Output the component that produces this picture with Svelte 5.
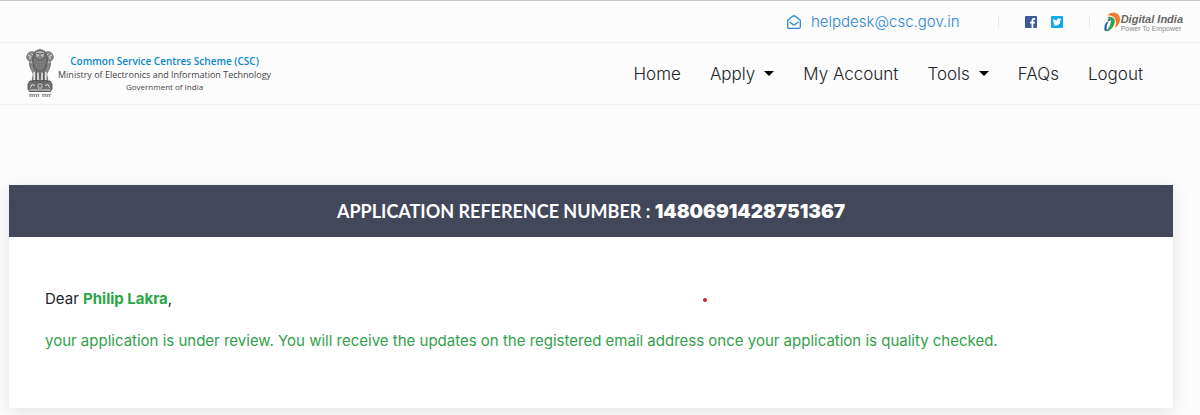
<script lang="ts">
  type NavItem = { label: string; menu?: boolean };

  const email = "helpdesk@csc.gov.in";
  const navItems: NavItem[] = [
    { label: "Home" },
    { label: "Apply", menu: true },
    { label: "My Account" },
    { label: "Tools", menu: true },
    { label: "FAQs" },
    { label: "Logout" }
  ];

  let reference = $state("1480691428751367");
  let applicant = $state("Philip Lakra");
</script>

<div class="page">
  <div class="topbar">
    <a class="mail" href={`mailto:${email}`}>
      <svg width="14" height="14" viewBox="0 0 14 14" aria-hidden="true">
        <path d="M.7 5.3 L6 1.1 Q7 .4 8 1.1 L13.3 5.3 V12 Q13.3 13.3 12 13.3 H2 Q.7 13.3 .7 12 Z M3 7.2 L6 9.6 Q7 10.3 8 9.6 L11 7.2" fill="none" stroke="currentColor" stroke-width="1.3" stroke-linejoin="round" stroke-linecap="round" />
      </svg>
      <span>{email}</span>
    </a>
    <div class="social">
      <a href="#facebook" aria-label="Facebook">
        <svg width="12" height="12" viewBox="0 0 12 12">
          <rect width="12" height="12" rx="1" fill="#3b5998" />
          <path d="M6.5 12 V7.6 H5 V5.8 H6.5 V4.4 Q6.5 2 8.8 2 H10.2 V3.7 H9.2 Q8.3 3.7 8.3 4.6 V5.8 H10.1 L9.8 7.6 H8.3 V12 Z" fill="#fff" />
        </svg>
      </a>
      <a href="#twitter" aria-label="Twitter">
        <svg width="12" height="12" viewBox="0 0 12 12">
          <rect width="12" height="12" rx="1" fill="#0fa8ea" />
          <path d="M10.3 3.4 L9.4 4.3 Q9.4 7.2 7.4 8.7 Q4.7 10.4 1.8 8.9 Q3.4 8.9 4.3 8.2 Q3 8 2.6 6.9 L3.4 6.8 Q2 6.3 2 4.9 L2.8 5.1 Q1.7 4.1 2.3 2.8 Q3.8 4.5 5.9 4.6 Q5.7 2.5 7.5 2.2 Q8.3 2.1 8.9 2.7 L10 2.4 L9.4 3.4 Z" fill="#fff" />
        </svg>
      </a>
    </div>
    <div class="digital">
      <svg width="17" height="20" viewBox="0 0 17 20" aria-hidden="true">
        <path d="M3 3.2 Q9.5 -2 14.4 2.6 Q19 9 11 16.2 Q13.4 8 9.8 5 Q7 2.8 3 3.2 Z" fill="#f27a32" />
        <path d="M3 5 Q9.6 4 10.8 8.4 Q11 13.8 5.4 18.6 Q3.4 20 2.4 18.8 Q8 12.3 6.6 8.2 Q5.5 6 3 5 Z" fill="#35a04a" />
        <path d="M4.9 8.9 Q0 10.3 .3 17.4 Q.8 19.6 2.9 18.8 Q2 13 4.9 8.9 Z" fill="#2c66aa" />
        <circle cx="5" cy="7.7" r="1.2" fill="#2c66aa" />
      </svg>
      <div class="digital-text">
        <strong>Digital India</strong>
        <span>Power To Empower</span>
      </div>
    </div>
  </div>

  <header>
    <a class="brand" href="#home">
      <svg width="28" height="50" viewBox="0 0 28 50" aria-hidden="true">
        <!-- side lions -->
        <path d="M8 3 Q3 1.8 1.6 5.5 Q-.1 8 1.3 10.3 Q2 12 4 12 Q2.5 16 5 20 L7.3 25 L6 32 H10 L12 20 Z M20 3 Q25 1.8 26.4 5.5 Q28.1 8 26.7 10.3 Q26 12 24 12 Q25.5 16 23 20 L20.7 25 L22 32 H18 L16 20 Z" fill="#8a8a8a" stroke="#555" stroke-width=".7" />
        <path d="M2 6 L5 7.5 L3 10 M26 6 L23 7.5 L25 10 M5.5 4.5 L8 7 M22.5 4.5 L20 7 M4.5 13 L8 14 M23.5 13 L20 14" fill="none" stroke="#ddd" stroke-width=".9" />
        <!-- centre lion -->
        <path d="M9 2.5 Q14 -1.2 19 2.5 L21 7 L21.5 12 L20 19 L17.5 22.5 L18 32 H14.8 L14 24 L13.2 32 H10 L10.5 22.5 L8 19 L6.5 12 L7 7 Z" fill="#707070" stroke="#484848" stroke-width=".7" />
        <path d="M10 3.6 Q14 1 18 3.6 L17.5 7.8 L14 9.8 L10.5 7.8 Z" fill="#c0c0c0" />
        <path d="M10.7 4.6 H13 M15 4.6 H17.3 M14 4 V7 M12 7.6 Q14 9 16 7.6" fill="none" stroke="#333" stroke-width=".8" />
        <path d="M8 11 Q14 16 20 11 M8.5 14 Q14 19 19.5 14 M10 17.5 Q14 21 18 17.5" fill="none" stroke="#bbb" stroke-width=".7" stroke-dasharray="1.2 .8" />
        <path d="M8 23 L8.3 31 M12 23.5 V31 M16 23.5 V31 M20 23 L19.7 31" stroke="#eee" stroke-width="1.5" />
        <!-- abacus with the wheel -->
        <path d="M4 32 H24 L26 35 V40 L24.5 42.5 H3.5 L2 40 V35 Z" fill="#707070" stroke="#444" stroke-width=".8" />
        <circle cx="14" cy="37" r="3.5" fill="#ddd" stroke="#333" stroke-width=".8" />
        <path d="M14 34 V40 M11 37 H17 M12 35 L16 39 M16 35 L12 39" stroke="#444" stroke-width=".6" />
        <path d="M4.5 38.5 L6 35.5 L9 36.5 M19 36.5 L22 35.5 L23.5 38.5 M3.5 41 H24.5" fill="none" stroke="#ddd" stroke-width="1" />
        <!-- motto -->
        <path d="M3 45.4 H13.5 M16 45.4 H25.5" stroke="#777" stroke-width=".7" />
        <path d="M3.5 46.8 H13 M16.5 46.8 H25" stroke="#888" stroke-width="2.2" stroke-dasharray="1.2 .9" />
      </svg>
      <div class="brand-text">
        <strong>Common Service Centres Scheme (CSC)</strong>
        <span>Ministry of Electronics and Information Technology</span>
        <small>Government of India</small>
      </div>
    </a>
    <nav aria-label="Main">
      {#each navItems as item}
        <a href={`#${item.label.toLowerCase().replace(" ", "-")}`}>
          {item.label}
          {#if item.menu}<i class="caret"></i>{/if}
        </a>
      {/each}
    </nav>
  </header>

  <main>
    <section class="card">
      <h1>APPLICATION REFERENCE NUMBER : <b>{reference}</b></h1>
      <div class="message">
        <p>Dear <strong>{applicant}</strong>,</p>
        <p class="status">your application is under review. You will receive the updates on the registered email address once your application is quality checked.</p>
        <i class="marker"></i>
      </div>
    </section>
  </main>
</div>

<style>
  :global(body) {
    background: #fcfcfc;
  }

  .page {
    font-family: Inter, "Liberation Sans", sans-serif;
    color: #212529;
    border-top: 1px solid #c9c5c6;
    overflow: hidden;
  }

  a {
    color: inherit;
    text-decoration: none;
  }

  svg {
    display: block;
    flex: none;
  }

  .topbar {
    display: flex;
    justify-content: flex-end;
    align-items: center;
    height: 41px;
    padding-right: 17px;
    border-bottom: 1px solid #f0f0f0;
  }

  .mail {
    display: flex;
    align-items: center;
    gap: 10px;
    margin-right: 38px;
    font-size: 15px;
    line-height: 20px;
    font-weight: 300;
    color: #2a86d8;
  }

  .social {
    display: flex;
    gap: 14px;
    padding: 0 26px;
    border-left: 1px solid #e6e6e6;
    border-right: 1px solid #e6e6e6;
  }

  .digital {
    display: flex;
    align-items: center;
    margin-left: 14px;
    font-family: "Liberation Sans", Arial, sans-serif;
  }

  .digital-text {
    display: flex;
    flex-direction: column;
    padding-top: 3px;
    color: #8a8a8a;
  }

  .digital-text strong {
    font-size: 11px;
    line-height: 11px;
    font-style: italic;
    color: #666;
  }

  .digital-text span {
    font-size: 7px;
    line-height: 7px;
  }

  header {
    display: flex;
    justify-content: space-between;
    align-items: center;
    height: 61px;
    padding: 0 57px 0 26px;
    border-bottom: 1px solid #f0f0f0;
  }

  .brand {
    display: flex;
    align-items: center;
    gap: 4px;
    font-family: "Open Sans", "Noto Sans", sans-serif;
  }

  .brand-text {
    display: flex;
    flex-direction: column;
    align-items: center;
    font-weight: 500;
    color: #444;
    white-space: nowrap;
  }

  .brand-text strong {
    font-size: 10px;
    line-height: 13px;
    font-weight: 600;
    color: #0a88cc;
  }

  .brand-text span {
    font-size: 9px;
    line-height: 13px;
  }

  .brand-text small {
    font-size: 8px;
    line-height: 12px;
  }

  nav {
    display: flex;
    gap: 29px;
    font-size: 17px;
    line-height: 24px;
    font-weight: 300;
    white-space: nowrap;
  }

  nav a {
    display: flex;
    align-items: center;
    gap: 9px;
  }

  .caret {
    border: 5px solid transparent;
    border-top-color: #000;
    border-bottom: 0;
  }

  main {
    padding: 80px 27px 7px 9px;
  }

  .card {
    background: #fff;
    box-shadow: 0 4px 18px rgba(0, 0, 0, 0.1);
  }

  h1 {
    margin: 0;
    padding: 14px;
    background: #43475a;
    color: #fff;
    font-family: Lato, sans-serif;
    font-size: 18px;
    line-height: 24px;
    font-weight: 700;
    text-align: center;
  }

  h1 b {
    font-family: Inter, sans-serif;
    font-size: 19px;
    line-height: 20px;
    font-weight: 900;
  }

  .message {
    position: relative;
    padding: 50px 36px 55px;
    font-size: 15px;
    line-height: 24px;
  }

  p {
    margin: 0;
  }

  p strong {
    font-weight: 700;
    color: #28a745;
  }

  .status {
    margin-top: 18px;
    color: #33a14b;
  }

  /* small dot that floats over the message */
  .marker {
    position: absolute;
    top: 61px;
    left: 60%;
    width: 4px;
    height: 4px;
    margin-left: -4px;
    border-radius: 50%;
    background: #d2202c;
  }
</style>
